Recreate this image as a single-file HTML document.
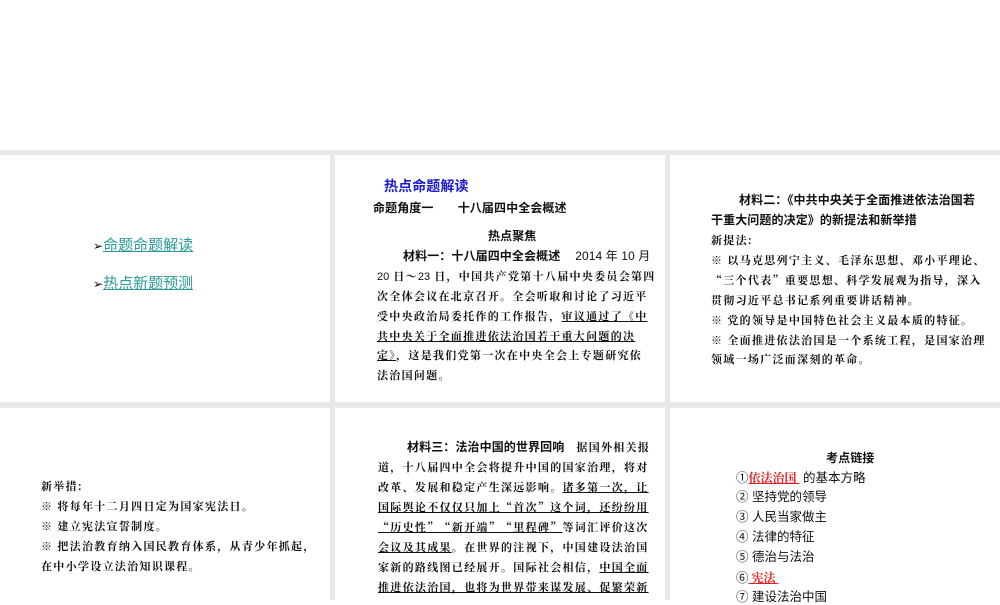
<!DOCTYPE html>
<html><head><meta charset="utf-8"><style>
*{margin:0;padding:0;box-sizing:border-box}
body{width:1000px;height:600px;position:relative;background:#fff;overflow:hidden;font-family:"Liberation Sans","Noto Sans CJK SC",sans-serif}
.g{position:absolute;background:#e8e8e8}
.l{position:absolute;white-space:nowrap;font-family:"Noto Serif CJK SC",serif;font-size:11px;font-weight:bold;color:#111;letter-spacing:1.3px;line-height:14px}
.l .n{font-family:"Liberation Sans",sans-serif;font-weight:normal;letter-spacing:0}
.h{position:absolute;white-space:nowrap;font-family:"Noto Sans CJK SC",sans-serif;font-size:12px;font-weight:bold;color:#111;line-height:14px;letter-spacing:0.1px}
.u{text-decoration:underline}
.s{position:absolute;white-space:nowrap;font-family:"Liberation Sans","Noto Sans CJK SC",sans-serif;font-size:12.5px;color:#111;line-height:15px}
.a{position:absolute;white-space:nowrap;font-size:15px;color:#2a9a9a;line-height:18px}
.a u{color:#2a9a9a}
</style></head><body>
<div class="g" style="left:0;top:150px;width:1000px;height:5px"></div>
<div class="g" style="left:0;top:402px;width:1000px;height:6px"></div>
<div class="g" style="left:330px;top:155px;width:5px;height:445px"></div>
<div class="g" style="left:665px;top:155px;width:5px;height:445px"></div>

<div class="a" style="left:93px;top:237px"><span style="color:#000;font-size:12px">➢</span><u>命题命题解读</u></div>
<div class="a" style="left:93px;top:275px"><span style="color:#000;font-size:12px">➢</span><u>热点新题预测</u></div>

<div class="h" style="left:384px;top:178px;font-size:14px;color:#1a1ad0;line-height:17px">热点命题解读</div>
<div class="h" style="left:373px;top:201px">命题角度一　　十八届四中全会概述</div>
<div class="h" style="left:488px;top:229px">热点聚焦</div>
<div class="h" style="left:403px;top:249px">材料一：十八届四中全会概述　 <span style="font-family:'Liberation Sans',sans-serif;font-weight:normal">2014 年 10 月</span></div>
<div class="l" style="left:377px;top:269px"><span class="n">20</span> 日～<span class="n">23</span> 日，中国共产党第十八届中央委员会第四</div>
<div class="l" style="left:377px;top:289px">次全体会议在北京召开。全会听取和讨论了习近平</div>
<div class="l" style="left:377px;top:309px">受中央政治局委托作的工作报告，<span class="u">审议通过了《中</span></div>
<div class="l u" style="left:377px;top:329px">共中央关于全面推进依法治国若干重大问题的决</div>
<div class="l" style="left:377px;top:348px"><span class="u">定》</span>，这是我们党第一次在中央全会上专题研究依</div>
<div class="l" style="left:377px;top:368px">法治国问题。</div>

<div class="h" style="left:739px;top:193px">材料二：《中共中央关于全面推进依法治国若</div>
<div class="h" style="left:711px;top:213px">干重大问题的决定》的新提法和新举措</div>
<div class="l" style="left:711px;top:233px">新提法:</div>
<div class="l" style="left:711px;top:253px">※ 以马克思列宁主义、毛泽东思想、邓小平理论、</div>
<div class="l" style="left:711px;top:273px">“三个代表”重要思想、科学发展观为指导，深入</div>
<div class="l" style="left:711px;top:293px">贯彻习近平总书记系列重要讲话精神。</div>
<div class="l" style="left:711px;top:313px">※ 党的领导是中国特色社会主义最本质的特征。</div>
<div class="l" style="left:711px;top:333px">※ 全面推进依法治国是一个系统工程，是国家治理</div>
<div class="l" style="left:711px;top:352px">领域一场广泛而深刻的革命。</div>

<div class="l" style="left:41px;top:479px">新举措:</div>
<div class="l" style="left:41px;top:499px">※ 将每年十二月四日定为国家宪法日。</div>
<div class="l" style="left:41px;top:519px">※ 建立宪法宣誓制度。</div>
<div class="l" style="left:41px;top:539px">※ 把法治教育纳入国民教育体系，从青少年抓起，</div>
<div class="l" style="left:41px;top:559px">在中小学设立法治知识课程。</div>

<div class="h" style="left:407px;top:440px">材料三：法治中国的世界回响　<span style="font-family:'Noto Serif CJK SC',serif;font-size:11px;letter-spacing:1.3px">据国外相关报</span></div>
<div class="l" style="left:378px;top:460px">道，十八届四中全会将提升中国的国家治理，将对</div>
<div class="l" style="left:378px;top:480px">改革、发展和稳定产生深远影响。<span class="u">诸多第一次，让</span></div>
<div class="l u" style="left:378px;top:500px">国际舆论不仅仅只加上“首次”这个词，还纷纷用</div>
<div class="l" style="left:378px;top:520px"><span class="u">“历史性”“新开端”“里程碑”</span>等词汇评价这次</div>
<div class="l" style="left:378px;top:540px"><span class="u">会议及其成果</span>。在世界的注视下，中国建设法治国</div>
<div class="l" style="left:378px;top:560px">家新的路线图已经展开。国际社会相信，<span class="u">中国全面</span></div>
<div class="l u" style="left:378px;top:580px">推进依法治国，也将为世界带来谋发展、促繁荣新</div>

<div class="h" style="left:826px;top:451px">考点链接</div>
<div class="s" style="left:736px;top:470px">①<span class="u" style="color:#e02020;font-family:'Noto Serif CJK SC',serif;font-weight:bold;font-size:12px">依法治国&nbsp;</span> 的基本方略</div>
<div class="s" style="left:736px;top:490px">② 坚持党的领导</div>
<div class="s" style="left:736px;top:510px">③ 人民当家做主</div>
<div class="s" style="left:736px;top:530px">④ 法律的特征</div>
<div class="s" style="left:736px;top:550px">⑤ 德治与法治</div>
<div class="s" style="left:736px;top:570px">⑥<span class="u" style="color:#e02020;font-family:'Noto Serif CJK SC',serif;font-weight:bold;font-size:12px"> 宪法&nbsp;</span></div>
<div class="s" style="left:736px;top:590px">⑦ 建设法治中国</div>
</body></html>
